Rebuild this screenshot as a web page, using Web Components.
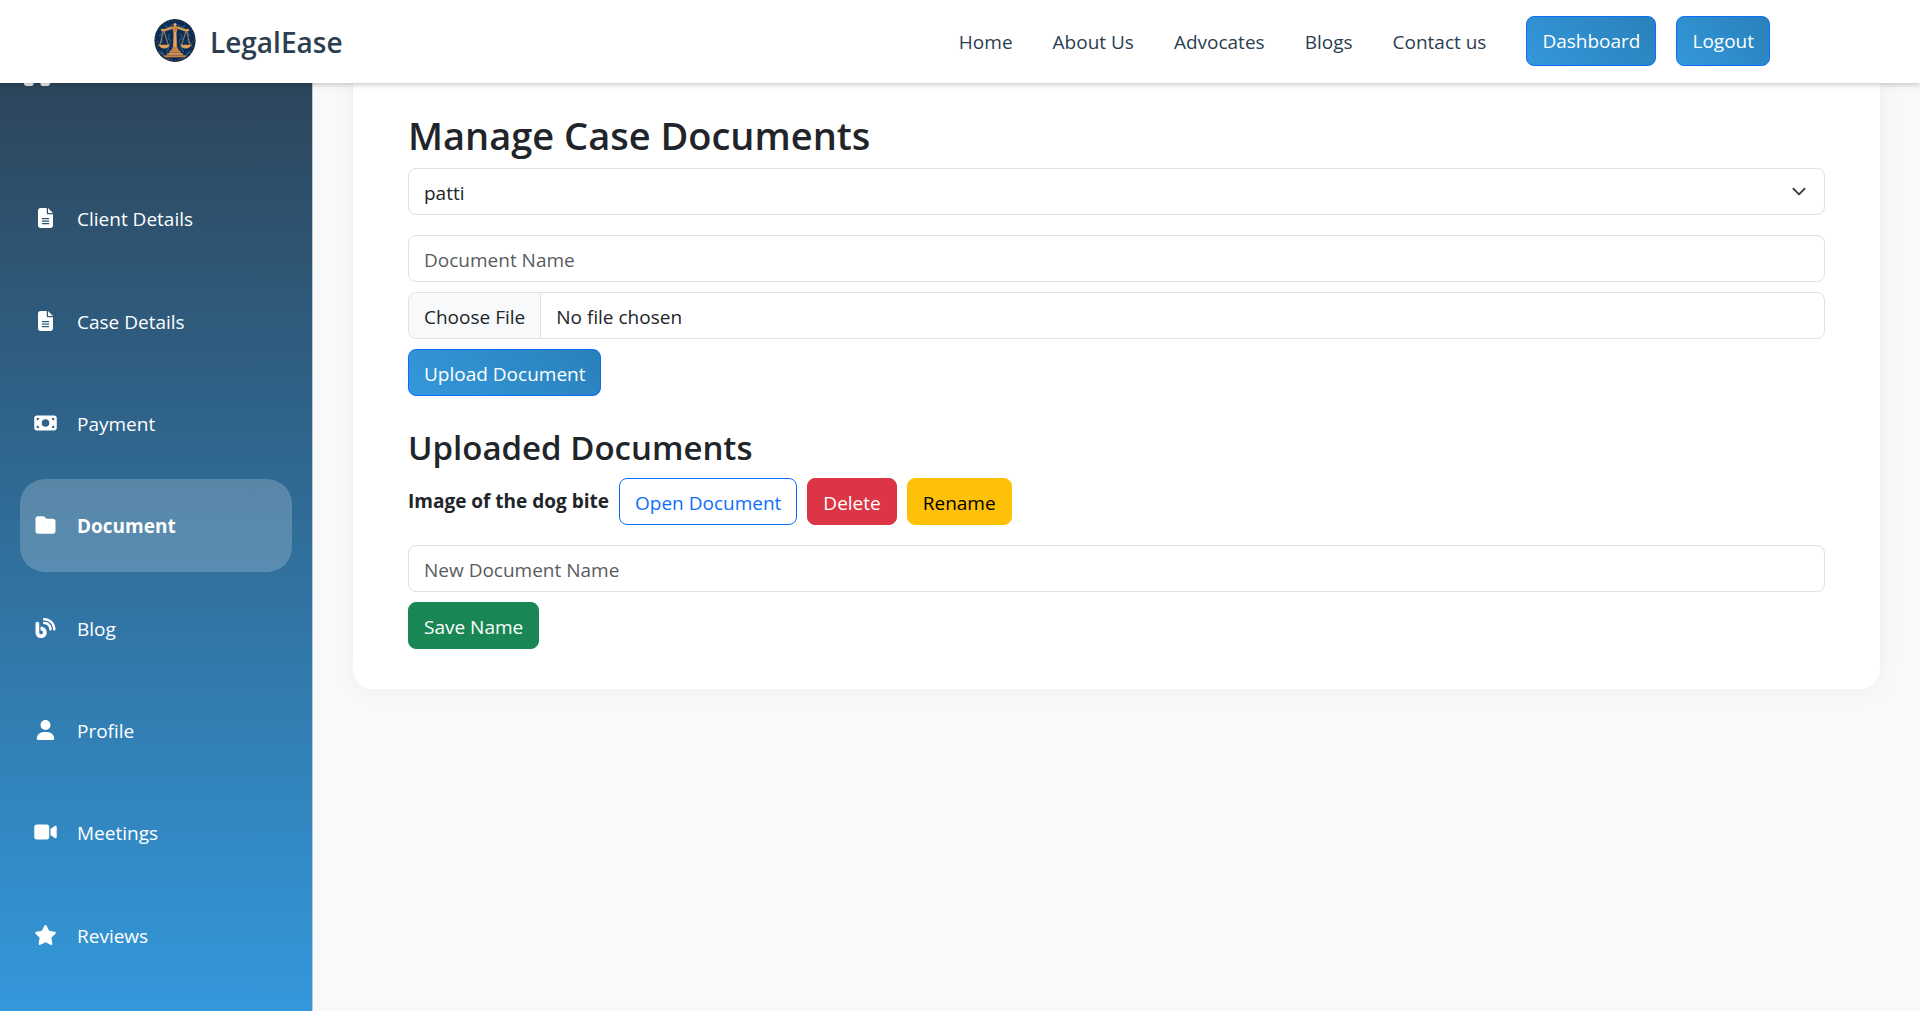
<!DOCTYPE html>
<html lang="en">
<head>
<meta charset="utf-8">
<meta name="viewport" content="width=device-width, initial-scale=1">
<title>LegalEase</title>
<style>
  html, body { margin: 0; }
  body {
    min-height: 100vh;
    background: #f8f9fb;
    color: #212529;
    font: 400 19px/30px "Open Sans", "Noto Sans", sans-serif;
    display: flex;
    flex-direction: column;
  }
</style>
</head>
<body>
<legal-app></legal-app>

<script>
const define = (name, markup, setup) => customElements.define(name, class extends HTMLElement {
  constructor() {
    super();
    this.attachShadow({ mode: "open" });
  }
  connectedCallback() {
    this.shadowRoot.innerHTML = `<style>*{box-sizing:border-box}</style>` +
      (typeof markup === "function" ? markup(this) : markup);
    if (setup) setup(this);
  }
});

const ICONS = {
  house: ["0 0 576 512", "M576 256c0 18-15 32-32 32h-32v176c0 26-22 48-48 48h-78c-26 0-40-20-40-44V352c0-18-14-32-32-32h-52c-18 0-32 14-32 32v116c0 24-14 44-40 44h-78c-26 0-48-22-48-48V288H32c-18 0-32-14-32-32 0-9 3-17 10-24L266 8c7-7 15-8 22-8s15 2 21 7l255 225c8 7 12 15 12 24z"],
  file: ["0 0 384 512", "M64 0C28.7 0 0 28.7 0 64V448c0 35.3 28.7 64 64 64H320c35.3 0 64-28.7 64-64V160H256c-17.7 0-32-14.3-32-32V0H64zM256 0V128H384L256 0zM112 256H272c8.8 0 16 7.2 16 16s-7.2 16-16 16H112c-8.8 0-16-7.2-16-16s7.2-16 16-16zm0 64H272c8.8 0 16 7.2 16 16s-7.2 16-16 16H112c-8.8 0-16-7.2-16-16s7.2-16 16-16zm0 64H272c8.8 0 16 7.2 16 16s-7.2 16-16 16H112c-8.8 0-16-7.2-16-16s7.2-16 16-16z"],
  money: ["0 0 576 512", "M64 64C28.7 64 0 92.7 0 128V384c0 35.3 28.7 64 64 64H512c35.3 0 64-28.7 64-64V128c0-35.3-28.7-64-64-64H64zm64 320H64V320c35.3 0 64 28.7 64 64zM64 192V128h64c0 35.3-28.7 64-64 64zM448 384c0-35.3 28.7-64 64-64v64H448zm64-192c-35.3 0-64-28.7-64-64h64v64zM288 160a96 96 0 1 1 0 192 96 96 0 1 1 0-192z"],
  folder: ["0 0 512 512", "M64 480H448c35.3 0 64-28.7 64-64V160c0-35.3-28.7-64-64-64H288c-10.1 0-19.6-4.7-25.6-12.8L243.2 57.6C231.1 41.5 212.1 32 192 32H64C28.7 32 0 60.7 0 96V416c0 35.3 28.7 64 64 64z"],
  blog: ["0 0 512 512", "M192 32c0 17.7 14.3 32 32 32c123.7 0 224 100.3 224 224c0 17.7 14.3 32 32 32s32-14.3 32-32C512 128.9 383.1 0 224 0c-17.7 0-32 14.3-32 32zm0 96c0 17.7 14.3 32 32 32c70.7 0 128 57.3 128 128c0 17.7 14.3 32 32 32s32-14.3 32-32c0-106-86-192-192-192c-17.7 0-32 14.3-32 32zM96 144c0-26.5-21.5-48-48-48S0 117.5 0 144V368c0 79.5 64.5 144 144 144s144-64.5 144-144s-64.5-144-144-144H128v96h16c26.5 0 48 21.5 48 48s-21.5 48-48 48s-48-21.5-48-48V144z"],
  user: ["0 0 448 512", "M224 256A128 128 0 1 0 224 0a128 128 0 1 0 0 256zm-45.7 48C79.8 304 0 383.8 0 482.3C0 498.7 13.3 512 29.7 512H418.3c16.4 0 29.7-13.3 29.7-29.7C448 383.8 368.2 304 269.7 304H178.3z"],
  video: ["0 0 576 512", "M0 128C0 92.7 28.7 64 64 64H320c35.3 0 64 28.7 64 64V384c0 35.3-28.7 64-64 64H64c-35.3 0-64-28.7-64-64V128zM559.1 99.8c10.4 5.6 16.9 16.4 16.9 28.2V384c0 11.8-6.5 22.6-16.9 28.2s-23 5-32.9-1.6l-96-64L416 337.1V320 192 174.9l14.2-9.5 96-64c9.8-6.5 22.4-7.2 32.9-1.6z"],
  star: ["0 0 576 512", "M316.9 18C311.6 7 300.4 0 288.1 0s-23.4 7-28.8 18L195 150.3 51.4 171.5c-12 1.8-22 10.2-25.7 21.7s-.7 24.2 7.9 32.7L137.8 329 113.2 474.7c-2 12 3 24.2 12.9 31.3s23 8 33.8 2.3l128.3-68.5 128.3 68.5c10.8 5.7 23.9 4.9 33.8-2.3s14.9-19.3 12.9-31.3L438.5 329 542.7 225.9c8.6-8.5 11.7-21.2 7.9-32.7s-13.7-19.9-25.7-21.7L381.2 150.3 316.9 18z"]
};

define("app-icon", el => {
  const [box, path] = ICONS[el.getAttribute("name")];
  return `
  <style>
    :host { display: block; flex: none; width: 23px; height: 20px; }
    :host([large]) { width: 34px; height: 30px; }
    svg { display: block; width: 100%; height: 100%; fill: currentColor; }
  </style>
  <svg viewBox="${box}" aria-hidden="true"><path d="${path}"/></svg>`;
});

/* Round emblem: golden scales on an ornamented navy disc. */
define("brand-logo", `
  <style>
    :host { display: block; flex: none; width: 50px; height: 50px; }
    svg { display: block; width: 100%; height: 100%; }
  </style>
  <svg viewBox="0 0 50 50" aria-hidden="true">
    <ellipse cx="25" cy="24.500" rx="20.600" ry="21.400" fill="#12233b"/>
    <ellipse cx="25" cy="24.500" rx="19.400" ry="20.200" fill="#0c2c55" stroke="#40566b" stroke-width=".8" stroke-dasharray="1.500 1.800"/>
    <g fill="none" stroke="#1c5c94" stroke-width="1.300">
      <path d="M9 20c3-1 4-4 3-7M41 20c-3-1-4-4-3-7M15 9c1 3 5 3 7 0M35 9c-1 3-5 3-7 0M9 36c3 0 5 2 5 5M41 36c-3 0-5 2-5 5M20 18c-3 2-2 5 1 7M30 18c3 2 2 5-1 7M20 31c-3 0-1 4-4 5M30 31c3 0 1 4 4 5M11 23c2 1 1 3 0 4M39 23c-2 1-1 3 0 4"/>
    </g>
    <g fill="none" stroke="#6c5138" stroke-width=".8">
      <path d="M7 25c2 1 2 4 1 6M43 25c-2 1-2 4-1 6M17 11c2 1 4 0 5-3M33 11c-2 1-4 0-5-3M16 43c3-1 5 0 6 2M34 43c-3-1-5 0-6 2M11 37l3 3M39 37l-3 3M21 26l-2 3M29 26l2 3"/>
    </g>
    <g fill="none" stroke="#d39a58" stroke-linecap="round">
      <path stroke-width="2.400" d="M12 14c4 1 7-2.600 13-2.600s9 3.600 13 2.600"/>
      <path stroke-width=".8" d="M13.500 15L9.700 29.500M14 15l4.500 14.500M36 15l-4.500 14.500M36.500 15l3.800 14.500"/>
    </g>
    <path fill="#dda05c" d="M8.800 28.800h10.900c-.6 2.400-2.800 3.600-5.400 3.600s-4.900-1.200-5.500-3.600zM30.300 28.800h10.900c-.6 2.400-2.900 3.600-5.500 3.600s-4.800-1.200-5.400-3.600z"/>
    <path fill="#c78444" d="M23.300 10h3.400l.6 4-.7 3 .6 14 2 4h-8.400l2-4 .6-14-.7-3zM20 34.500h10l1.200 2.300H18.800zM17 37.200h16v1.800H17zM14.500 39.300h21v1.900h-21z"/>
    <circle cx="25" cy="8.600" r="1.600" fill="#e0ab6a"/>
    <path fill="#f3c88b" d="M24.500 16h1v15h-1zM19 37.400h12v.6H19z"/>
  </svg>`);

/* Gradient, solid and outlined buttons; renders a link when it has an href. */
define("app-button", el => {
  const tag = el.hasAttribute("href") ? `a href="${el.getAttribute("href")}"` : `button type="button"`;
  const end = el.hasAttribute("href") ? "a" : "button";
  return `
  <style>
    :host { display: block; --bg: linear-gradient(45deg, #3498db, #2980b9); --line: #0d6efd; --ink: #fff; }
    :host([kind=outline]) { --bg: transparent; --ink: #0d6efd; }
    :host([kind=danger]) { --bg: #dc3545; --line: #dc3545; }
    :host([kind=warning]) { --bg: #ffc107; --line: #ffc107; --ink: #000; }
    :host([kind=success]) { --bg: #198754; --line: #198754; }
    a, button {
      display: block; margin: 0; padding: 9px 15px 6px;
      border: 1px solid var(--line); border-radius: 8px;
      background: var(--bg) border-box; color: var(--ink);
      font: inherit; text-decoration: none; white-space: nowrap; cursor: pointer;
    }
    :host([tall]) a { padding: 9px 15px; }
  </style>
  <${tag}><slot></slot></${end}>`;
});

define("nav-link", el => `
  <style>
    :host { display: block; padding-top: 2px; }
    a { color: #2c3e50; text-decoration: none; white-space: nowrap; }
  </style>
  <a href="${el.getAttribute("href")}"><slot></slot></a>`);

define("site-header", `
  <style>
    :host {
      display: block; position: sticky; top: 0; z-index: 10; flex: none;
      background: #fff; box-shadow: 0 2px 5px rgba(0, 0, 0, .2);
    }
    .bar {
      max-width: 1650px; margin: 0 auto; padding: 16px 15px 17px;
      display: flex; align-items: center; justify-content: space-between;
    }
    .brand {
      display: flex; align-items: center; gap: 10px;
      color: #2c3e50; text-decoration: none;
      font-size: 28px; font-weight: 600;
    }
    .brand span { padding-top: 2px; }
    nav, .actions { display: flex; align-items: center; }
    nav { gap: 40px; }
    .actions { gap: 20px; }
  </style>
  <div class="bar">
    <a class="brand" href="#home"><brand-logo></brand-logo><span>LegalEase</span></a>
    <nav aria-label="Main">
      <nav-link href="#home">Home</nav-link>
      <nav-link href="#about">About Us</nav-link>
      <nav-link href="#advocates">Advocates</nav-link>
      <nav-link href="#blogs">Blogs</nav-link>
      <nav-link href="#contact">Contact us</nav-link>
      <div class="actions">
        <app-button tall href="#dashboard">Dashboard</app-button>
        <app-button tall href="#logout">Logout</app-button>
      </div>
    </nav>
  </div>`);

define("side-item", el => `
  <style>
    :host { display: flex; flex: 1; }
    a {
      flex: 1; display: flex; align-items: center; gap: 20px; padding: 0 14px;
      border-radius: 25px; color: #fff; text-decoration: none;
    }
    span { padding-top: 2px; }
    :host([active]) a { background: rgba(255, 255, 255, .2); font-weight: 700; }
  </style>
  <a href="${el.getAttribute("href")}"${el.hasAttribute("active") ? ' aria-current="page"' : ""}>
    <app-icon name="${el.getAttribute("icon")}"></app-icon><span><slot></slot></span>
  </a>`);

define("side-bar", `
  <style>
    :host {
      display: flex; flex-direction: column; flex: none;
      width: 313px; height: 100vh; padding: 30px 20px;
      border-right: 1px solid #c4c8cc;
      background: linear-gradient(180deg, #2c3e50, #3498db);
    }
    .home { display: flex; align-items: center; height: 82px; margin-bottom: 60px; color: #ececec; }
    nav { flex: 1; display: flex; flex-direction: column; gap: 10px; }
  </style>
  <a class="home" href="#home" aria-label="Dashboard home"><app-icon large name="house"></app-icon></a>
  <nav aria-label="Dashboard">
    <side-item icon="file" href="#client">Client Details</side-item>
    <side-item icon="file" href="#case">Case Details</side-item>
    <side-item icon="money" href="#payment">Payment</side-item>
    <side-item icon="folder" href="#document" active>Document</side-item>
    <side-item icon="blog" href="#blog">Blog</side-item>
    <side-item icon="user" href="#profile">Profile</side-item>
    <side-item icon="video" href="#meetings">Meetings</side-item>
    <side-item icon="star" href="#reviews">Reviews</side-item>
  </nav>`);

const FIELD = `
    :host { display: block; }
    input, select {
      display: block; width: 100%; height: 47px; margin: 0; padding: 9px 15px 6px;
      border: 1px solid #dee2e6; border-radius: 8px; background: #fff;
      color: #212529; font: inherit; appearance: none;
    }`;

define("text-field", el => `
  <style>${FIELD}
    input::placeholder { color: #212529; opacity: .75; }
  </style>
  <input type="text" placeholder="${el.getAttribute("label")}" aria-label="${el.getAttribute("label")}">`);

define("file-field", el => `
  <style>${FIELD}
    input { overflow: hidden; }
    input::file-selector-button {
      margin: -9px 15px -6px -15px; padding: 9px 15px 6px;
      border: 0 solid #dee2e6; border-right-width: 1px;
      background: #f8f9fa; color: #212529; font: inherit;
    }
  </style>
  <input type="file" aria-label="${el.getAttribute("label")}">`);

define("select-field", el => `
  <style>${FIELD}
    .box { display: grid; align-items: center; }
    .box > * { grid-area: 1 / 1; }
    svg { justify-self: end; width: 20px; height: 15px; margin-right: 16px; pointer-events: none; }
  </style>
  <div class="box">
    <select aria-label="${el.getAttribute("label")}"><option>${el.getAttribute("value")}</option></select>
    <svg viewBox="0 0 16 16" aria-hidden="true"><path d="m2 5 6 6 6-6" fill="none" stroke="#343a40" stroke-width="2" stroke-linecap="round" stroke-linejoin="round"/></svg>
  </div>`);

define("document-row", `
  <style>
    :host { display: flex; align-items: flex-start; gap: 10px; }
    strong { font-weight: 700; line-height: 46px; }
  </style>
  <strong><slot></slot></strong>
  <app-button kind="outline">Open Document</app-button>
  <app-button kind="danger">Delete</app-button>
  <app-button kind="warning">Rename</app-button>`);

define("document-manager", `
  <style>
    :host {
      display: block; padding: 110px 55px 40px;
      background: #fff; border-radius: 20px; box-shadow: 0 0 25px rgba(0, 0, 0, .05);
    }
    h2, h3 { margin: 0 0 8px; font-weight: 600; }
    h2 { font-size: 38px; line-height: 50px; }
    h3 { font-size: 33px; line-height: 45px; }
    form { display: flex; flex-direction: column; align-items: flex-start; gap: 10px; }
    form > :not(app-button) { width: 100%; }
    select-field, document-row { margin-bottom: 10px; }
    .upload { margin-bottom: 29px; }
  </style>
  <h2>Manage Case Documents</h2>
  <form class="upload">
    <select-field label="Case" value="patti"></select-field>
    <text-field label="Document Name"></text-field>
    <file-field label="Document file"></file-field>
    <app-button>Upload Document</app-button>
  </form>
  <h3>Uploaded Documents</h3>
  <form>
    <document-row>Image of the dog bite</document-row>
    <text-field label="New Document Name"></text-field>
    <app-button kind="success">Save Name</app-button>
  </form>`);

/* The dashboard runs underneath the sticky header. */
define("legal-app", `
  <style>
    :host { flex: 1; display: grid; grid-template-rows: auto 1fr; }
    site-header { grid-area: 1 / 1; }
    .body { grid-area: 1 / 1 / span 2; display: flex; align-items: flex-start; }
    main { flex: 1; min-width: 0; padding: 0 40px; }
  </style>
  <site-header></site-header>
  <div class="body">
    <side-bar></side-bar>
    <main><document-manager></document-manager></main>
  </div>`);
</script>
</body>
</html>
